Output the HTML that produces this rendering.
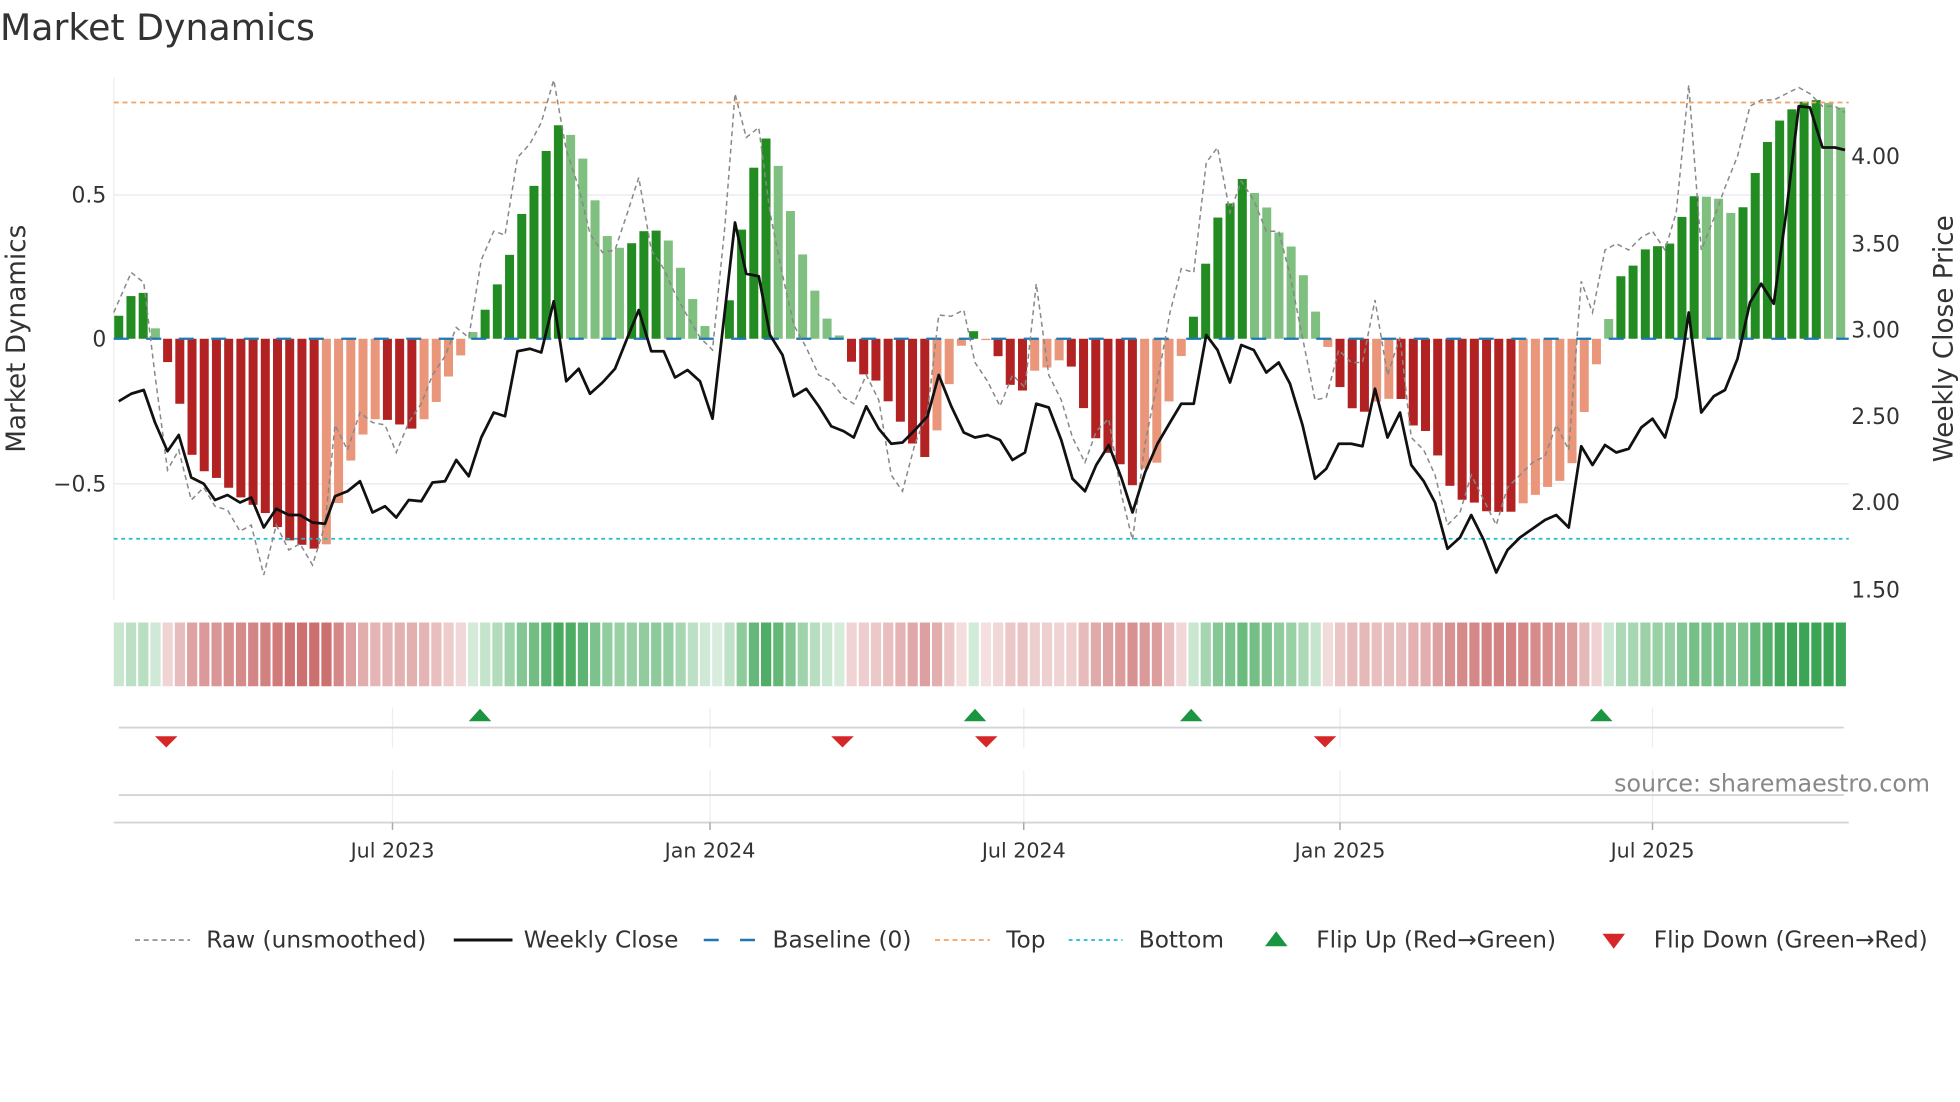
<!DOCTYPE html>
<html><head><meta charset="utf-8"><style>
html,body{margin:0;padding:0;background:#fff;width:1960px;height:1102px;overflow:hidden}
svg text{font-family:"DejaVu Sans","Liberation Sans",sans-serif;fill:#333}
</style></head><body>
<svg id="s" width="1960" height="1102" viewBox="0 0 1568 881.6" xmlns="http://www.w3.org/2000/svg">
<text x="0" y="32" font-size="29">Market Dynamics</text>
<line x1="91" y1="62" x2="91" y2="480" stroke="#eee" stroke-width="1"/>
<line x1="91" y1="156" x2="1479" y2="156" stroke="#e8e8f0" stroke-width="1"/>
<line x1="91" y1="387" x2="1479" y2="387" stroke="#e8e8f0" stroke-width="1"/>
<g id="bars"></g>
<g id="strip"></g>
<line x1="91" y1="82" x2="1479" y2="82" stroke="#f4a460" stroke-width="1.4" stroke-dasharray="4,3"/>
<line x1="91" y1="431" x2="1479" y2="431" stroke="#17becf" stroke-width="1.4" stroke-dasharray="3,3"/>
<line x1="91" y1="271" x2="1479" y2="271" stroke="#1f77b4" stroke-width="1.8" stroke-dasharray="12,14"/>
<polyline id="raw" fill="none" stroke="#888" stroke-width="1.2" stroke-dasharray="4,3"/>
<polyline id="px" fill="none" stroke="#111" stroke-width="2.2" stroke-linejoin="round"/>
<g font-size="17.5" text-anchor="end">
<text x="85" y="162">0.5</text><text x="85" y="277">0</text><text x="85" y="393">−0.5</text></g>
<g font-size="17.5">
<text x="1481" y="131">4.00</text><text x="1481" y="201">3.50</text><text x="1481" y="270">3.00</text>
<text x="1481" y="339">2.50</text><text x="1481" y="408">2.00</text><text x="1481" y="478">1.50</text></g>
<text transform="translate(20,271) rotate(-90)" font-size="21" text-anchor="middle">Market Dynamics</text>
<text transform="translate(1562,271) rotate(-90)" font-size="21" text-anchor="middle">Weekly Close Price</text>
<g stroke="#eceef3" stroke-width="1">
<line x1="314" y1="566" x2="314" y2="598"/><line x1="568" y1="566" x2="568" y2="598"/><line x1="819" y1="566" x2="819" y2="598"/><line x1="1072" y1="566" x2="1072" y2="598"/><line x1="1322" y1="566" x2="1322" y2="598"/>
<line x1="314" y1="616" x2="314" y2="658"/><line x1="568" y1="616" x2="568" y2="658"/><line x1="819" y1="616" x2="819" y2="658"/><line x1="1072" y1="616" x2="1072" y2="658"/><line x1="1322" y1="616" x2="1322" y2="658"/>
</g>
<line x1="95" y1="582" x2="1475" y2="582" stroke="#d4d4d8" stroke-width="1.5"/>
<line x1="95" y1="636" x2="1475" y2="636" stroke="#d4d4d8" stroke-width="1.5"/>
<line x1="91" y1="658" x2="1479" y2="658" stroke="#d4d4d8" stroke-width="1.5"/>
<g stroke="#aaa" stroke-width="1.2"><line x1="314" y1="658" x2="314" y2="664"/><line x1="568" y1="658" x2="568" y2="664"/><line x1="819" y1="658" x2="819" y2="664"/><line x1="1072" y1="658" x2="1072" y2="664"/><line x1="1322" y1="658" x2="1322" y2="664"/></g>
<g font-size="16.5" text-anchor="middle">
<text x="314" y="686">Jul 2023</text><text x="568" y="686">Jan 2024</text><text x="819" y="686">Jul 2024</text><text x="1072" y="686">Jan 2025</text><text x="1322" y="686">Jul 2025</text></g>
<g fill="#1a9641">
<polygon points="375,577 384,567 393,577"/><polygon points="771,577 780,567 789,577"/><polygon points="944,577 953,567 962,577"/><polygon points="1272,577 1281,567 1290,577"/></g>
<g fill="#d62728">
<polygon points="124,589 133,598 142,589"/><polygon points="665,589 674,598 683,589"/><polygon points="780,589 789,598 798,589"/><polygon points="1051,589 1060,598 1069,589"/></g>
<text x="1544" y="633" font-size="19" text-anchor="end" style="fill:#888">source: sharemaestro.com</text>
<g font-size="18.6">
<line x1="108" y1="752" x2="152" y2="752" stroke="#888" stroke-width="1.3" stroke-dasharray="4,3"/><text x="165" y="758">Raw (unsmoothed)</text>
<line x1="363" y1="752" x2="410" y2="752" stroke="#111" stroke-width="2.4"/><text x="419" y="758">Weekly Close</text>
<line x1="563" y1="752" x2="606" y2="752" stroke="#1f77b4" stroke-width="2" stroke-dasharray="12,17"/><text x="618" y="758">Baseline (0)</text>
<line x1="748" y1="752" x2="792" y2="752" stroke="#f4a460" stroke-width="1.4" stroke-dasharray="4,3"/><text x="805" y="758">Top</text>
<line x1="855" y1="752" x2="898" y2="752" stroke="#17becf" stroke-width="1.4" stroke-dasharray="3,3"/><text x="911" y="758">Bottom</text>
<polygon points="1012,757 1021,745 1030,757" fill="#1a9641"/><text x="1053" y="758">Flip Up (Red→Green)</text>
<polygon points="1282,747 1291,759 1300,747" fill="#d62728"/><text x="1323" y="758">Flip Down (Green→Red)</text>
</g>
</svg>
<script>
var K=[[95,.08],[105,.15],[115,.16],[124,.04],[134,-.08],[143,-.21],[153,-.4],[163,-.46],[172,-.48],[192,-.55],[211,-.6],[231,-.7],[250,-.73],[260,-.73],[268,-.62],[278,-.45],[288,-.35],[298,-.28],[308,-.28],[317,-.29],[327,-.32],[337,-.29],[346,-.25],[356,-.15],[365,-.09],[375,0],[385,.07],[395,.17],[404,.23],[414,.4],[424,.5],[433,.59],[443,.75],[453,.73],[463,.67],[472,.55],[482,.38],[492,.32],[502,.31],[511,.37],[521,.38],[531,.37],[540,.3],[550,.18],[560,.08],[570,-.01],[580,.02],[588,.28],[597,.45],[607,.69],[616,.7],[626,.55],[635,.4],[645,.25],[655,.13],[665,.04],[674,0],[683,-.1],[693,-.13],[703,-.15],[713,-.24],[722,-.3],[732,-.38],[742,-.42],[751,-.3],[761,-.13],[771,0],[780,.03],[790,-.01],[800,-.07],[810,-.18],[820,-.18],[829,-.1],[839,-.1],[849,-.07],[858,-.1],[868,-.26],[877,-.35],[887,-.4],[897,-.44],[906,-.51],[916,-.45],[926,-.43],[936,-.2],[945,-.06],[955,.08],[965,.27],[974,.42],[984,.47],[993,.56],[1003,.51],[1013,.46],[1023,.37],[1032,.33],[1042,.23],[1052,.1],[1061,-.01],[1071,-.16],[1081,-.24],[1090,-.26],[1100,-.22],[1110,-.21],[1120,-.2],[1129,-.3],[1139,-.31],[1148,-.38],[1158,-.5],[1168,-.56],[1177,-.56],[1187,-.6],[1197,-.6],[1206,-.61],[1216,-.58],[1226,-.55],[1236,-.52],[1245,-.5],[1255,-.48],[1265,-.3],[1274,-.13],[1284,0],[1293,.21],[1303,.23],[1313,.3],[1322,.33],[1332,.31],[1341,.36],[1351,.5],[1361,.49],[1371,.5],[1380,.47],[1390,.4],[1400,.53],[1409,.63],[1419,.74],[1429,.78],[1439,.82],[1448,.83],[1458,.83],[1468,.81],[1476,.8]];
function interp(x){for(var j=1;j<K.length;j++){if(x<=K[j][0]){var a=K[j-1],b=K[j];return a[1]+(b[1]-a[1])*(x-a[0])/(b[0]-a[0]);}}return K[K.length-1][1];}
var N=142,st=9.77,bh='',sh='',prev=0;
for(var i=0;i<N;i++){var x=95+i*st,v=interp(x);var dark=Math.abs(v)>=Math.abs(prev)-0.001;
var c=v>=0?(dark?'#228b22':'#7fbf7f'):(dark?'#b22222':'#e9967a');
var y0=271,h=Math.abs(v)*230;var y=v>=0?y0-h:y0;
if(h>0.5)bh+='<rect x="'+(x-3.6).toFixed(2)+'" y="'+y.toFixed(2)+'" width="7.2" height="'+h.toFixed(2)+'" fill="'+c+'"/>';
var a=Math.min(1,0.2+0.85*Math.abs(v)/0.85);var col=v>=0?'rgba(60,165,85,'+a.toFixed(2)+')':'rgba(200,100,100,'+a.toFixed(2)+')';
sh+='<rect x="'+(91+i*st).toFixed(2)+'" y="498" width="'+(st-1.6).toFixed(2)+'" height="51" fill="'+col+'"/>';
prev=v;}
document.getElementById('bars').innerHTML=bh;document.getElementById('strip').innerHTML=sh;
var P="95,321 105,315 115,312 124,338 134,361 143,348 153,382 163,387 172,400 182,396 192,402 201,398 211,422 221,407 231,412 240,412 250,418 260,419 268,397 278,393 288,385 298,410 308,405 317,414 327,400 337,401 346,386 356,385 365,368 375,381 385,350 395,330 404,333 414,281 424,279 433,282 443,241 453,305 463,295 472,315 482,306 492,295 502,270 511,248 521,281 531,281 540,302 550,296 560,305 570,335 588,178 597,219 607,221 616,268 626,284 635,317 645,311 655,325 665,341 675,345 683,350 693,325 703,343 713,355 722,354 732,344 742,333 751,300 761,325 771,346 780,350 790,348 800,352 810,368 820,362 829,323 839,326 849,352 858,383 868,393 877,372 887,356 897,382 906,410 916,378 926,355 936,338 945,323 955,323 965,268 974,280 984,306 993,276 1003,280 1013,298 1023,290 1032,307 1042,340 1052,383 1061,375 1071,355 1081,355 1090,357 1100,311 1110,350 1120,330 1129,372 1139,385 1148,402 1158,439 1168,430 1177,412 1187,432 1197,458 1206,440 1216,430 1226,423 1236,416 1245,412 1255,422 1265,357 1274,372 1284,356 1293,362 1303,359 1313,342 1322,335 1332,350 1341,318 1351,250 1361,330 1371,317 1380,312 1390,287 1400,242 1409,227 1419,243 1429,170 1439,85 1448,86 1458,118 1468,118 1476,120";
var R="91,250 105,218 115,226 124,300 134,376 143,360 153,400 163,390 172,405 182,408 192,425 201,420 211,460 221,420 231,440 240,435 250,452 260,420 268,340 278,360 288,330 298,338 308,340 317,362 327,338 337,323 346,300 356,285 365,262 375,270 385,208 395,185 404,188 414,126 424,115 433,98 443,64 453,120 463,150 472,187 482,202 492,200 502,170 511,142 521,200 531,215 540,235 550,253 560,270 570,280 580,180 588,75 597,110 607,102 616,170 626,220 635,260 645,278 655,300 665,305 675,318 683,323 693,300 703,320 713,380 722,393 732,355 742,330 751,252 761,253 771,248 780,290 790,305 800,325 810,300 820,310 829,227 839,300 849,320 858,350 868,370 877,345 887,335 897,395 906,432 916,355 926,305 936,250 945,215 955,218 965,130 974,118 984,170 993,145 1003,160 1013,185 1023,185 1032,220 1042,270 1052,320 1061,318 1071,280 1081,290 1090,290 1100,240 1110,300 1120,270 1129,350 1139,360 1148,380 1158,420 1168,410 1177,380 1187,400 1197,420 1206,390 1216,380 1226,370 1236,365 1245,340 1255,360 1265,225 1274,250 1284,200 1293,195 1303,200 1313,190 1322,185 1332,200 1341,170 1351,68 1361,200 1371,175 1380,150 1390,125 1400,85 1409,80 1419,80 1429,75 1439,70 1448,75 1458,85 1468,85 1476,90";
document.getElementById('px').setAttribute('points',P);document.getElementById('raw').setAttribute('points',R);
</script>
</body></html>
